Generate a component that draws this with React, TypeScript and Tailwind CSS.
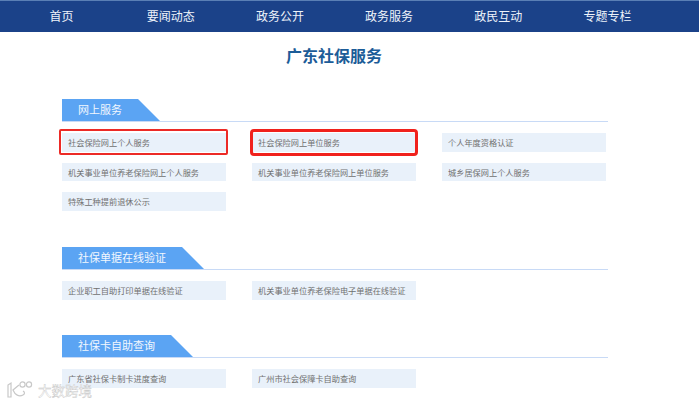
import React from 'react';

const navItems = ['首页', '要闻动态', '政务公开', '政务服务', '政民互动', '专题专栏'];

type Item = { label: string; box?: 'thin' | 'thick' };

const sections: { title: string; tabW: string; items: Item[] }[] = [
    {
        title: '网上服务',
        tabW: 'w-[98px]',
        items: [
            { label: '社会保险网上个人服务', box: 'thin' },
            { label: '社会保险网上单位服务', box: 'thick' },
            { label: '个人年度资格认证' },
            { label: '机关事业单位养老保险网上个人服务' },
            { label: '机关事业单位养老保险网上单位服务' },
            { label: '城乡居保网上个人服务' },
            { label: '特殊工种提前退休公示' },
        ],
    },
    {
        title: '社保单据在线验证',
        tabW: 'w-[142px]',
        items: [
            { label: '企业职工自助打印单据在线验证' },
            { label: '机关事业单位养老保险电子单据在线验证' },
        ],
    },
    {
        title: '社保卡自助查询',
        tabW: 'w-[131px]',
        items: [
            { label: '广东省社保卡制卡进度查询' },
            { label: '广州市社会保障卡自助查询' },
        ],
    },
];

const ServiceItem: React.FC<{ item: Item }> = ({ item }) => (
    <div className="relative h-[18.5px] bg-[#e9f1fa] pl-[6px] text-[8.2px] leading-[18.5px] text-[#707070]">
        {item.label}
        {item.box === 'thin' && (
            <span className="absolute left-[-3px] right-[-2px] top-[-4px] bottom-[-3px] rounded-[2px] border-2 border-[#ec2a26]" />
        )}
        {item.box === 'thick' && (
            <span className="absolute left-[-2px] right-[-2px] top-[-4px] bottom-[-4px] rounded-[4px] border-[3px] border-[#f0211c]" />
        )}
    </div>
);

const App: React.FC = () => {
    return (
        <div className="relative h-[404px] w-[699px] overflow-hidden bg-white font-['Noto_Sans_CJK_SC','Liberation_Sans',sans-serif]">
            {/* Nav */}
            <div className="h-[32px] border-t border-[#5a7fb5] bg-[#1b4289]">
                <div className="ml-[7px] grid w-[655px] grid-cols-6">
                    {navItems.map(item => (
                        <div key={item} className="text-center text-[12px] leading-[29px] text-[#eef3fa]">{item}</div>
                    ))}
                </div>
            </div>

            <h1 className="mt-[12px] w-[668px] text-center text-[16px] font-bold leading-[22px] text-[#1c5c98]">广东社保服务</h1>

            <div className="mt-[33px] ml-[62px] flex w-[546px] flex-col gap-[35.5px]">
                {sections.map((section, index) => (
                    <div key={section.title} className={index === 0 ? 'min-h-[112.5px]' : ''}>
                        <div className="h-[23px] border-b-[1.5px] border-[#c8daf6]">
                            <div className={`${section.tabW} h-[22px] bg-[#5ba4f3] pl-[16px] text-[11px] leading-[21px] text-[#f2f7fe] [clip-path:polygon(0_0,calc(100%-22px)_0,100%_100%,0_100%)]`}>
                                {section.title}
                            </div>
                        </div>
                        <div className="mt-[11px] grid w-[544px] grid-cols-[164px_164px_164px] gap-x-[26px] gap-y-[11px]">
                            {section.items.map(item => (
                                <ServiceItem key={item.label} item={item} />
                            ))}
                        </div>
                    </div>
                ))}
            </div>

            {/* Watermark */}
            <div className="absolute left-[7px] top-[380px] flex items-center gap-[5px]">
                <svg width="26" height="17" viewBox="0 0 26 17" fill="none" stroke="#c8c8c8" strokeWidth="1.2">
                    <path d="M1 4 L4 2 L4 16 L1 16 Z" fill="#fff" />
                    <path d="M12 4 L6 9 C8 14 12 16 16 14 C18 13 18 11 16 10" fill="#fff" />
                    <circle cx="15.5" cy="3.5" r="2.6" fill="#fff" />
                    <circle cx="22" cy="3.5" r="2.6" fill="#fff" />
                </svg>
                <span className="mt-[3px] text-[13.5px] leading-[15px] text-white [-webkit-text-stroke:0.4px_#c4c4c4]">大数跨境</span>
            </div>
        </div>
    );
};

export default App;
